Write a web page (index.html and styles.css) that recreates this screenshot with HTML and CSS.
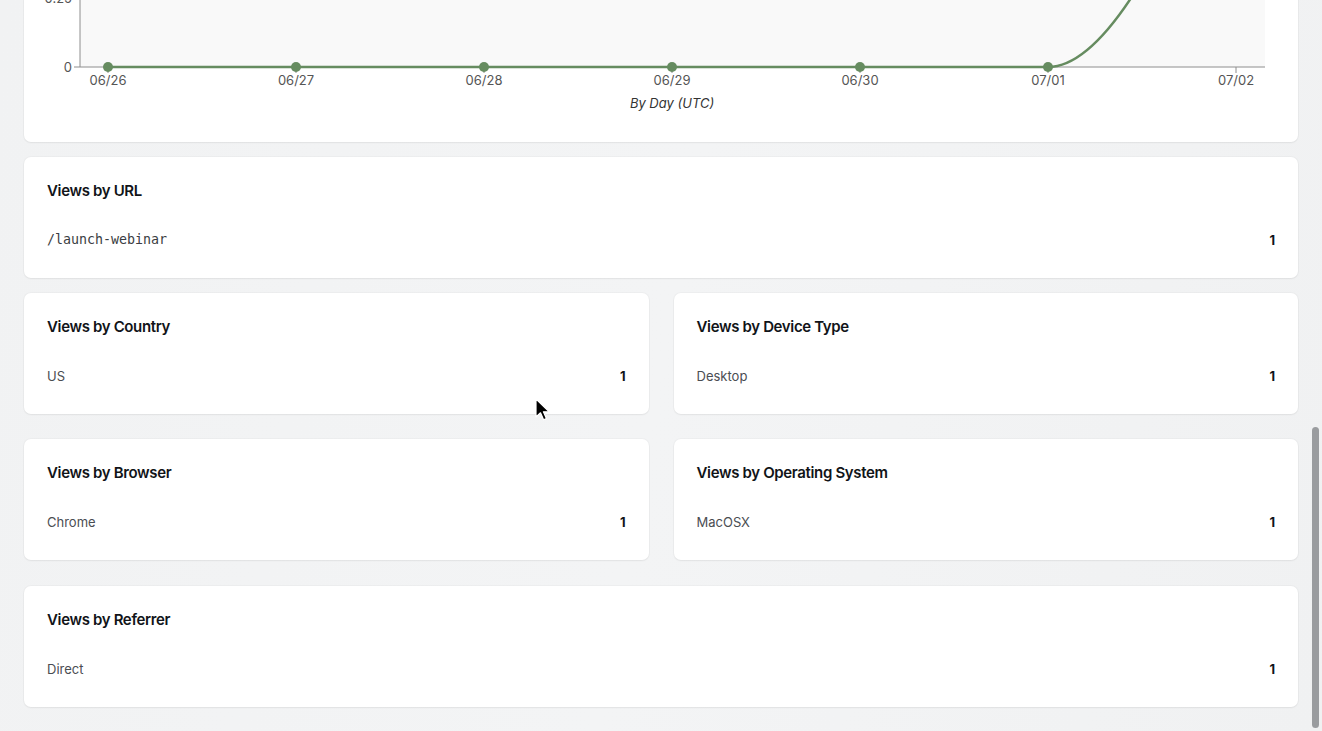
FILE: index.html
```html
<!DOCTYPE html>
<html lang="en">
<head>
<meta charset="utf-8">
<title>Analytics</title>
<link rel="stylesheet" href="styles.css">
</head>
<body>
<main class="page">
  <section class="card chart-card">
    <svg class="chart" width="1274" height="402" viewBox="0 0 1274 402">
      <rect class="plot-bg" x="56" y="20" width="1185" height="307"/>
      <line class="axis" x1="56" y1="20" x2="56" y2="327"/>
      <line class="axis" x1="56" y1="327" x2="1241" y2="327"/>
      <g class="ytick">
        <line x1="50" y1="327" x2="56" y2="327"/>
        <line x1="50" y1="258" x2="56" y2="258"/>
      </g>
      <g class="ylabels">
        <text x="48" y="331.5">0</text>
        <text x="48" y="262.5">0.25</text>
      </g>
      <g class="xtick">
        <line x1="84" y1="327" x2="84" y2="333"/>
        <line x1="272" y1="327" x2="272" y2="333"/>
        <line x1="460" y1="327" x2="460" y2="333"/>
        <line x1="648" y1="327" x2="648" y2="333"/>
        <line x1="836" y1="327" x2="836" y2="333"/>
        <line x1="1024" y1="327" x2="1024" y2="333"/>
        <line x1="1212" y1="327" x2="1212" y2="333"/>
      </g>
      <g class="xlabels">
        <text x="84" y="345">06/26</text>
        <text x="272" y="345">06/27</text>
        <text x="460" y="345">06/28</text>
        <text x="648" y="345">06/29</text>
        <text x="836" y="345">06/30</text>
        <text x="1024" y="345">07/01</text>
        <text x="1212" y="345">07/02</text>
      </g>
      <text class="xtitle" x="648" y="368">By Day (UTC)</text>
      <path class="series" d="M84 327 L1024 327 C1086.67 327 1149.33 188.9 1212 51"/>
      <g class="dots">
        <circle cx="84" cy="327" r="5"/>
        <circle cx="272" cy="327" r="5"/>
        <circle cx="460" cy="327" r="5"/>
        <circle cx="648" cy="327" r="5"/>
        <circle cx="836" cy="327" r="5"/>
        <circle cx="1024" cy="327" r="5"/>
        <circle cx="1212" cy="51" r="5"/>
      </g>
    </svg>
  </section>

  <section class="card stat-card">
    <h2 class="card-title">Views by URL</h2>
    <div class="row"><span class="label mono">/launch-webinar</span><span class="value">1</span></div>
  </section>

  <div class="grid">
    <section class="card stat-card">
      <h2 class="card-title">Views by Country</h2>
      <div class="row"><span class="label">US</span><span class="value">1</span></div>
    </section>
    <section class="card stat-card">
      <h2 class="card-title">Views by Device Type</h2>
      <div class="row"><span class="label">Desktop</span><span class="value">1</span></div>
    </section>
    <section class="card stat-card">
      <h2 class="card-title">Views by Browser</h2>
      <div class="row"><span class="label">Chrome</span><span class="value">1</span></div>
    </section>
    <section class="card stat-card">
      <h2 class="card-title">Views by Operating System</h2>
      <div class="row"><span class="label">MacOSX</span><span class="value">1</span></div>
    </section>
  </div>

  <section class="card stat-card">
    <h2 class="card-title">Views by Referrer</h2>
    <div class="row"><span class="label">Direct</span><span class="value">1</span></div>
  </section>
</main>

<div class="scroll-thumb"></div>
<svg class="cursor" width="16" height="24" viewBox="0 0 16 24">
  <path d="M1 1 L1 19 L5.5 14.8 L8.6 21.8 L11.4 20.6 L8.4 13.8 L14.2 13.8 Z" fill="#000" stroke="#fff" stroke-width="1.2" stroke-linejoin="round"/>
</svg>
</body>
</html>
```

FILE: styles.css
```css
html, body {
  margin: 0;
  padding: 0;
  height: 100%;
  overflow: hidden;
}

body {
  background: linear-gradient(100deg, #f1f2f3 0%, #f3f4f5 50%, #f0f1f2 100%);
  font-family: Inter, "Noto Sans", "Liberation Sans", sans-serif;
  color: #111418;
}

.page {
  display: flex;
  flex-direction: column;
  gap: 15px;
  padding: 0 24px;
  margin-top: -260px;
}

.card {
  background: #ffffff;
  border-radius: 7px;
  box-shadow: 0 1px 2px rgba(0, 0, 0, 0.05), 0 0 0 1px rgba(0, 0, 0, 0.025);
}

.chart-card {
  height: 402px;
  overflow: hidden;
}

.chart {
  display: block;
}

.plot-bg {
  fill: #f9f9f9;
}

.axis {
  stroke: #8e8e8e;
  stroke-width: 1;
}

.ytick line,
.xtick line {
  stroke: #8e8e8e;
  stroke-width: 1;
}

.ylabels text {
  font-family: Inter, "Liberation Sans", sans-serif;
  font-size: 13px;
  fill: #555;
  text-anchor: end;
}

.xlabels text {
  font-family: Inter, "Liberation Sans", sans-serif;
  font-size: 13px;
  fill: #555;
  text-anchor: middle;
}

.xtitle {
  font-family: Inter, "Liberation Sans", sans-serif;
  font-size: 13px;
  font-style: italic;
  fill: #333;
  text-anchor: middle;
}

.series {
  fill: none;
  stroke: #668c60;
  stroke-width: 2.5;
}

.dots circle {
  fill: #668c60;
}

.grid {
  display: grid;
  grid-template-columns: 1fr 1fr;
  column-gap: 25px;
  row-gap: 25px;
  margin-bottom: 11px;
}

.stat-card {
  padding: 24px 23px 24px 23px;
  height: 121px;
  box-sizing: border-box;
}

.card-title {
  margin: 0 0 24px 0;
  font-size: 15px;
  line-height: 20px;
  font-weight: 600;
  color: #111418;
  letter-spacing: -0.35px;
}

.row {
  display: flex;
  justify-content: space-between;
  align-items: center;
  padding: 5px 0;
  line-height: 20px;
  font-size: 13px;
}

.label {
  color: #4a4d52;
}

.label.mono {
  font-family: "DejaVu Sans Mono", "Liberation Mono", monospace;
  font-size: 13.3px;
  color: #3a3d42;
}

.value {
  font-weight: 700;
  color: #111418;
}

.scroll-thumb {
  position: fixed;
  left: 1312px;
  top: 427px;
  width: 7px;
  height: 301px;
  border-radius: 4px;
  background: #9a9c9f;
}

.cursor {
  position: fixed;
  left: 535px;
  top: 398px;
}
```
